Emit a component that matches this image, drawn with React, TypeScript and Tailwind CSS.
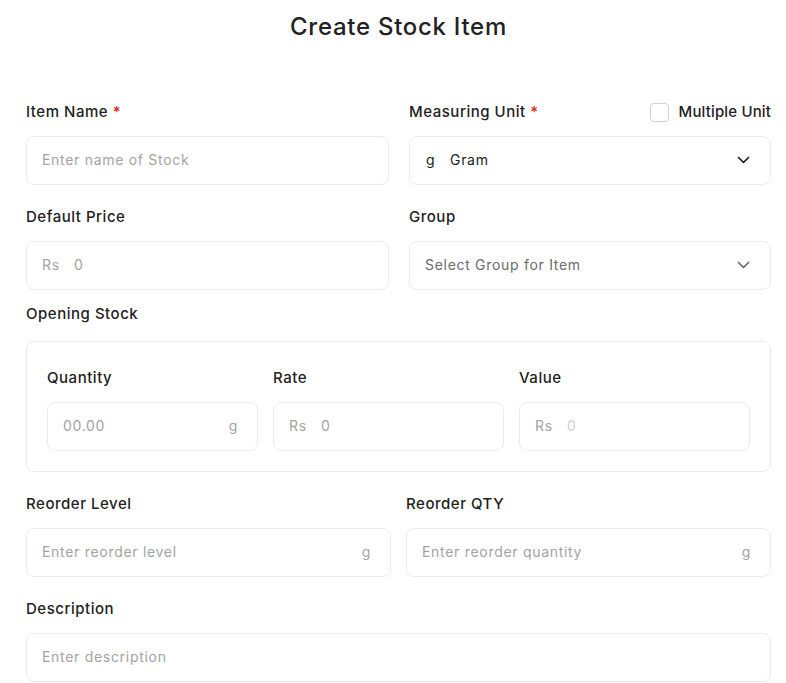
import React from "react";

function Chevron({ dark }: { dark?: boolean }) {
  return (
    <svg width="13" height="8" viewBox="0 0 13 8" fill="none" stroke={dark ? "#1f1f1f" : "#6b6b6b"} strokeWidth="1.7" strokeLinecap="round" strokeLinejoin="round">
      <path d="M1.5 1.5l5 5 5-5" />
    </svg>
  );
}

const box = "h-[49px] rounded-[8px] border border-[#ece9f2] bg-white flex items-center pb-[2px]";
const label = "text-[15px] leading-[20px] font-medium text-[#222222] tracking-[0.035em]";
const txt = "text-[14px] tracking-[0.05em]";

export default function App() {
  return (
    <div className="min-h-screen bg-white text-[#222222]" style={{ fontFamily: "Inter, 'Noto Sans', sans-serif" }}>
      <div className="px-[26px] pr-[15px]">
        <h1 className="pt-[11px] h-[102px] text-center text-[24px] leading-[32px] font-medium tracking-[0.03em] text-[#222222]">Create Stock Item</h1>

        <div className="grid grid-cols-[363px_362px] gap-x-[20px]">
          <div>
            <div className={label}>
              Item Name <span className="text-[#e02424]">*</span>
            </div>
            <div className={`${box} mt-[14px] px-[15px]`}>
              <span className={`${txt} text-[#a3a3a3]`}>Enter name of Stock</span>
            </div>
          </div>
          <div>
            <div className="flex items-center justify-between">
              <div className={label}>
                Measuring Unit <span className="text-[#e02424]">*</span>
              </div>
              <div className="flex items-center gap-[10px]">
                <span className="w-[19px] h-[19px] rounded-[4px] border border-[#cfcfd6] bg-white" />
                <span className="text-[15px] leading-[20px] font-medium text-[#222222] tracking-[0.01em]">Multiple Unit</span>
              </div>
            </div>
            <div className={`${box} mt-[14px] pl-[16px] pr-[20px] justify-between`}>
              <div className={`flex items-center ${txt} text-[#222222]`}>
                <span className="w-[24px]">g</span>
                <span>Gram</span>
              </div>
              <Chevron dark />
            </div>
          </div>

          <div className="mt-[22px]">
            <div className={label}>Default Price</div>
            <div className={`${box} mt-[14px] px-[15px] ${txt} text-[#a3a3a3]`}>
              <span className="w-[32px]">Rs</span>
              <span>0</span>
            </div>
          </div>
          <div className="mt-[22px]">
            <div className={label}>Group</div>
            <div className={`${box} mt-[14px] pl-[15px] pr-[20px] justify-between`}>
              <span className={`${txt} text-[#6b6b6b]`}>Select Group for Item</span>
              <Chevron />
            </div>
          </div>
        </div>

        <div className="mt-[14px]">
          <div className={label}>Opening Stock</div>
          <div className="mt-[17px] h-[131px] rounded-[8px] border border-[#ece9f2] px-[20px] pt-[26px]">
            <div className="grid grid-cols-[211px_231px_231px] gap-x-[15px]">
              <div>
                <div className={label}>Quantity</div>
                <div className={`${box} mt-[14px] px-[15px] justify-between ${txt} text-[#a3a3a3]`}>
                  <span>00.00</span>
                  <span className="mr-[4px]">g</span>
                </div>
              </div>
              <div>
                <div className={label}>Rate</div>
                <div className={`${box} mt-[14px] px-[15px] ${txt} text-[#a3a3a3]`}>
                  <span className="w-[32px]">Rs</span>
                  <span>0</span>
                </div>
              </div>
              <div>
                <div className={label}>Value</div>
                <div className={`${box} mt-[14px] px-[15px] ${txt}`}>
                  <span className="w-[32px] text-[#a3a3a3]">Rs</span>
                  <span className="text-[#cfcfcf]">0</span>
                </div>
              </div>
            </div>
          </div>
        </div>

        <div className="mt-[22px] grid grid-cols-[365px_365px] gap-x-[15px]">
          <div>
            <div className={label}>Reorder Level</div>
            <div className={`${box} mt-[14px] pl-[15px] pr-[19px] justify-between ${txt} text-[#a3a3a3]`}>
              <span>Enter reorder level</span>
              <span>g</span>
            </div>
          </div>
          <div>
            <div className={label}>Reorder QTY</div>
            <div className={`${box} mt-[14px] pl-[15px] pr-[19px] justify-between ${txt} text-[#a3a3a3]`}>
              <span>Enter reorder quantity</span>
              <span>g</span>
            </div>
          </div>
        </div>

        <div className="mt-[22px]">
          <div className={label}>Description</div>
          <div className={`${box} mt-[14px] px-[15px] ${txt} text-[#a3a3a3]`}>
            <span>Enter description</span>
          </div>
        </div>
      </div>
    </div>
  );
}
